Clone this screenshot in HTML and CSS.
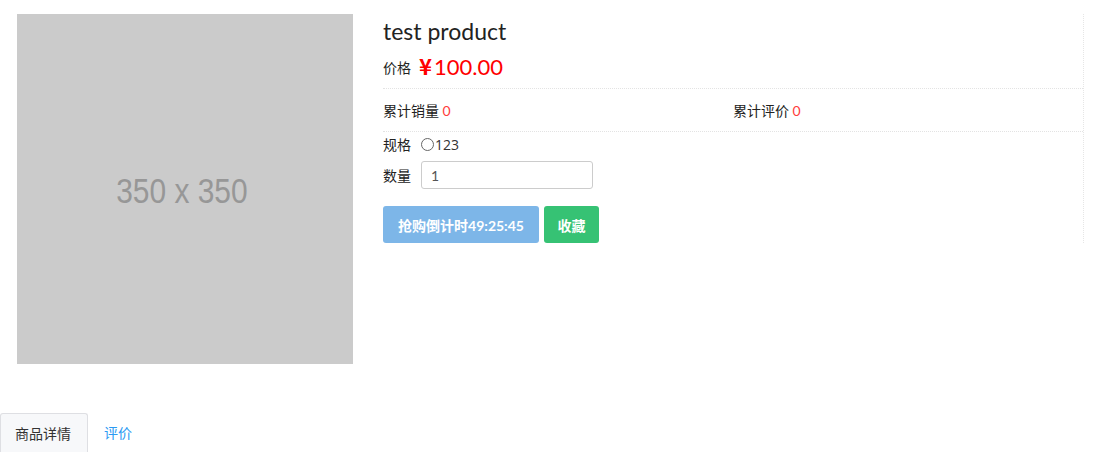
FILE: index.html
```html
<!DOCTYPE html>
<html lang="zh">
<head>
<meta charset="utf-8">
<title>test product</title>
<link rel="stylesheet" href="styles.css">
</head>
<body>
<div class="product">
  <div class="gallery"><span>350 x 350</span></div>
  <div class="info">
    <h1 class="title">test product</h1>
    <div class="price-row"><span class="label">价格</span><span class="price"><span class="yen">¥</span>100.00</span></div>
    <div class="stats">
      <div class="stat">累计销量 <span class="num">0</span></div>
      <div class="stat">累计评价 <span class="num">0</span></div>
    </div>
    <div class="spec-row"><span class="label">规格</span><label class="radio"><span class="circle"></span>123</label></div>
    <div class="qty-row"><span class="label">数量</span><input class="qty" type="text" value="1"></div>
    <div class="actions">
      <button class="btn btn-buy">抢购倒计时49:25:45</button>
      <button class="btn btn-fav">收藏</button>
    </div>
  </div>
</div>
<ul class="tabs">
  <li class="tab active">商品详情</li>
  <li class="tab">评价</li>
</ul>
</body>
</html>
```
FILE: styles.css
```css
html, body {
  margin: 0;
  padding: 0;
  background: #fff;
}
body {
  font-family: Lato, "Noto Sans CJK SC", sans-serif;
  font-size: 14px;
  color: #333;
}
.product {
  display: flex;
  align-items: flex-start;
  padding-top: 14px;
}
.gallery {
  margin-left: 17px;
  width: 336px;
  height: 350px;
  background: #cbcbcb;
  display: flex;
  align-items: center;
  justify-content: center;
  flex-shrink: 0;
}
.gallery span {
  font-family: "Liberation Sans", Arial, sans-serif;
  font-size: 35px;
  color: #979797;
  transform: scaleX(0.855);
  display: inline-block;
  margin-top: 4px;
  margin-left: -6px;
}
.info {
  margin-left: 30px;
  width: 700px;
  border-right: 1px dotted #e6e6e6;
}
.title {
  margin: 2px 0 0;
  font-size: 23px;
  font-weight: 400;
  line-height: 30px;
  color: #222;
}
.price-row {
  display: flex;
  align-items: center;
  height: 37px;
  border-bottom: 1px dotted #e3e3e3;
  padding-bottom: 5px;
}
.price-row .label {
  margin-top: 4px;
}
.price {
  color: #ff0000;
  font-size: 22px;
  margin-left: -2px;
}
.yen {
  font-family: "Noto Sans CJK SC", sans-serif;
  font-weight: 700;
  margin-right: 2px;
}
.stats {
  display: flex;
  height: 42px;
  align-items: center;
  border-bottom: 1px dotted #e3e3e3;
}
.stat {
  width: 351px;
  color: #222;
}
.num {
  color: #ff3b3b;
}
.spec-row {
  display: flex;
  align-items: center;
  height: 22px;
  margin-top: 1px;
}
.label {
  color: #222;
  margin-right: 10px;
}
.radio {
  display: flex;
  align-items: center;
  color: #333;
  font-family: "Open Sans", "Noto Sans CJK SC", sans-serif;
}
.circle {
  width: 11px;
  height: 11px;
  border: 1px solid #666;
  border-radius: 50%;
  margin-right: 1px;
}
.qty-row {
  display: flex;
  align-items: center;
  margin-top: 6px;
}
.qty-row .label {
  margin-right: 10px;
}
.qty {
  width: 172px;
  height: 28px;
  box-sizing: border-box;
  border: 1px solid #ccc;
  border-radius: 3px;
  padding: 0 9px;
  font-family: Lato, sans-serif;
  font-size: 14px;
  color: #555;
  outline: none;
}
.actions {
  display: flex;
  gap: 5px;
  margin-top: 17px;
}
.btn {
  height: 37px;
  border: none;
  border-radius: 3px;
  color: #fff;
  font-family: Lato, "Noto Sans CJK SC", sans-serif;
  font-size: 14px;
  font-weight: 700;
  padding: 0 10px;
}
.btn-buy {
  width: 156px;
  background: #7db6e8;
}
.btn-fav {
  width: 55px;
  background: #36c274;
}
.tabs {
  list-style: none;
  margin: 49px 0 0;
  padding: 0;
  display: flex;
}
.tab {
  height: 39px;
  line-height: 40px;
  padding: 0 16px;
  color: #2b9af3;
  font-size: 14px;
}
.tab.active {
  color: #333;
  background: #f7f8fa;
  border: 1px solid #dedfe3;
  border-bottom: none;
  border-radius: 3px 3px 0 0;
  padding: 0 14px;
  width: 58px;
}
```
